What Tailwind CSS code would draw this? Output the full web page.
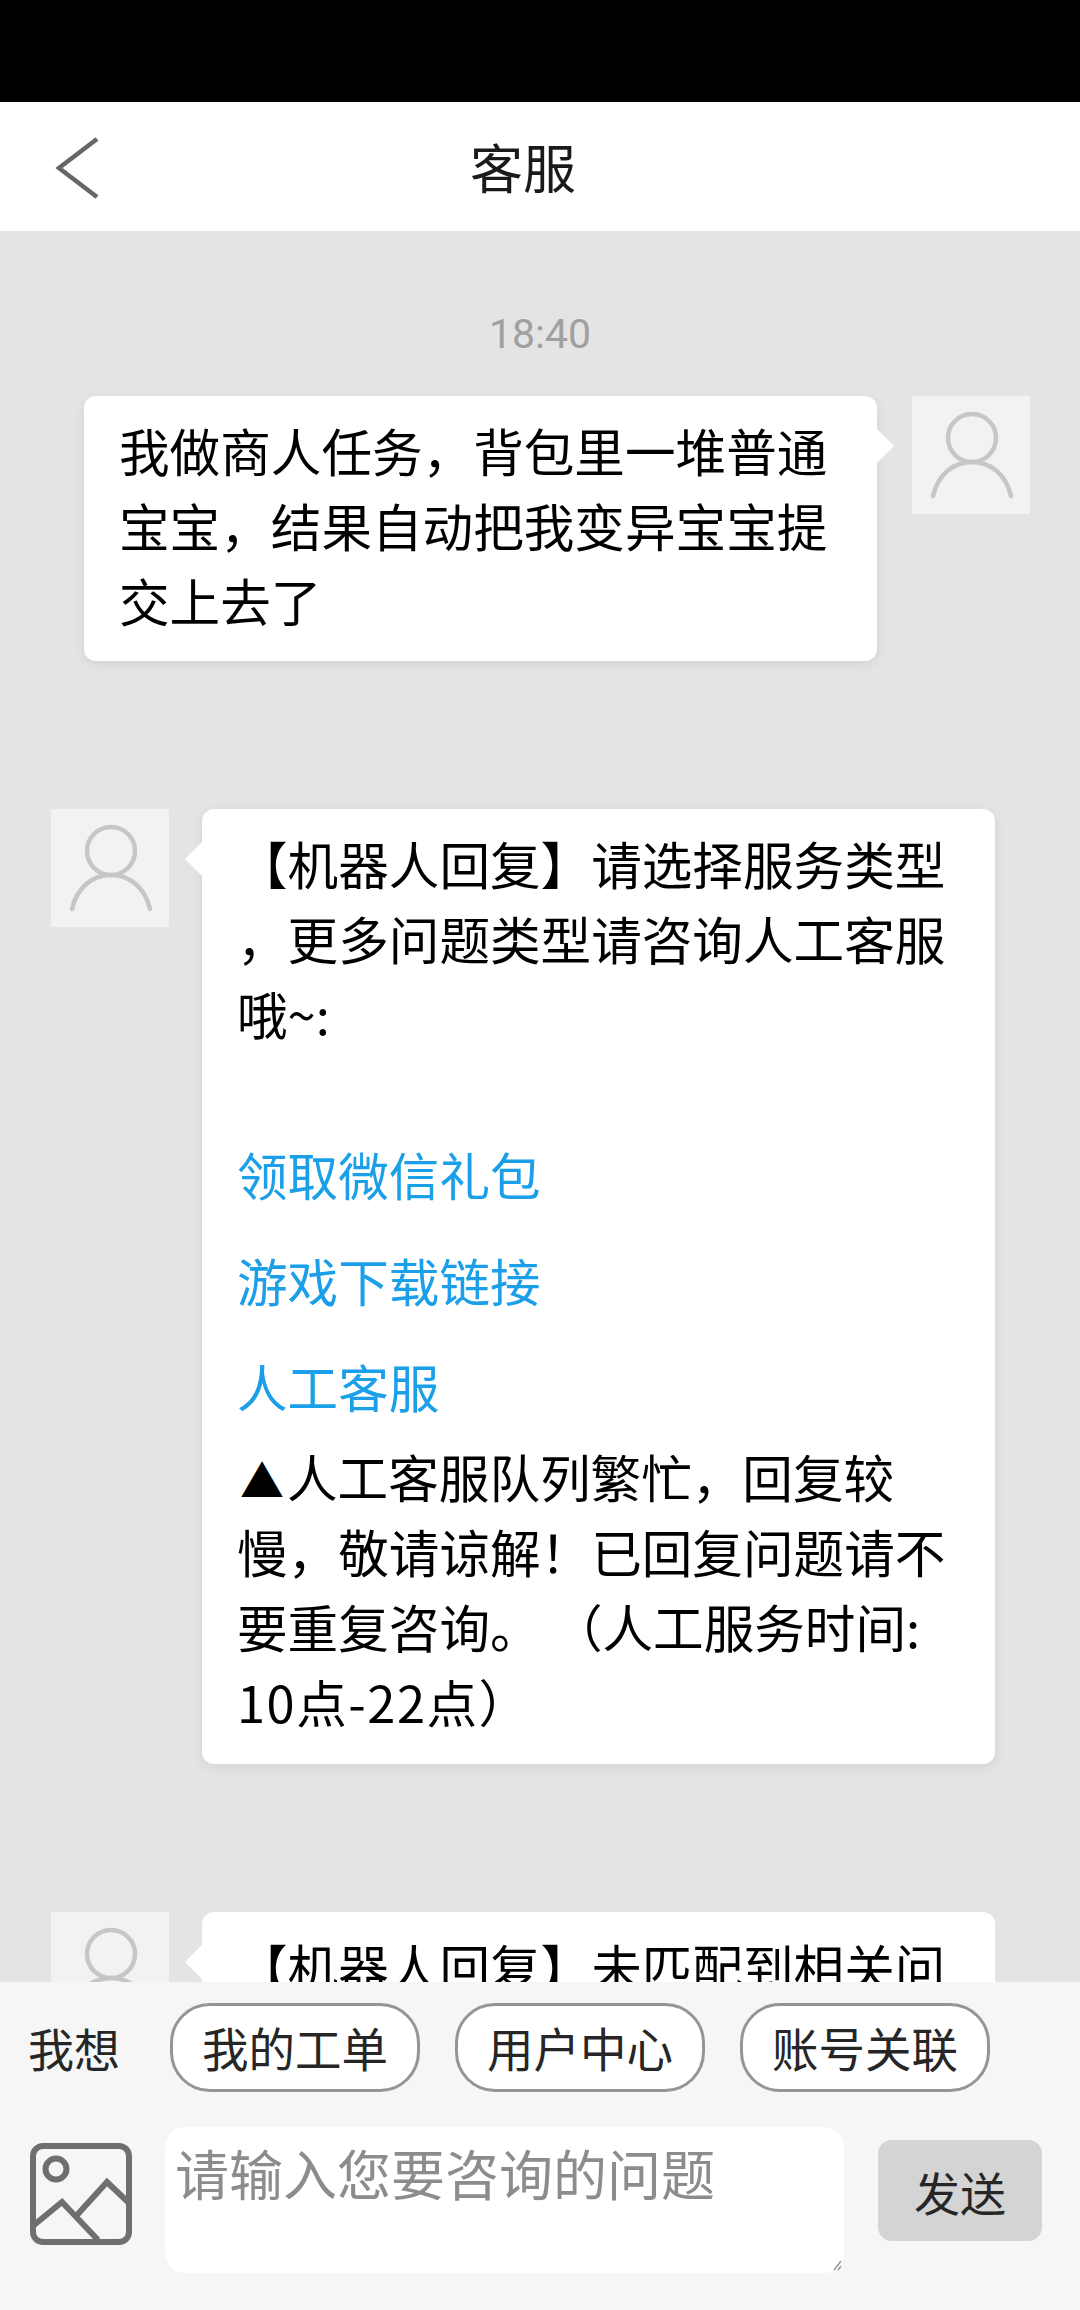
<!DOCTYPE html>
<html lang="zh-CN">
<head>
<meta charset="utf-8">
<title>客服</title>
<script src="https://cdn.jsdelivr.net/npm/@tailwindcss/browser@4"></script>
</head>
<body class="m-0">
<div class="w-[1080px] h-[2310px] flex flex-col overflow-hidden bg-[#e4e4e4] text-black font-['Noto_Sans_CJK_SC','Noto_Sans',sans-serif]">
  <div class="h-[102px] shrink-0 bg-black"></div>
  <header class="h-[129px] shrink-0 bg-white flex items-center relative">
    <svg class="ml-[54px] w-[48px] h-[64px]" viewBox="0 0 48 64" fill="none" stroke="#666666" stroke-width="4.5"><path d="M43 4 L5 33 L43 62"/></svg>
    <h1 class="absolute left-[470px] top-[34px] text-[53px] leading-[60px] font-normal text-[#1a1a1a]">客服</h1>
  </header>

  <main class="flex-1 min-h-0 overflow-hidden">
    <div class="pt-[78px] h-[50px] box-content text-center text-[41px] leading-[50px] text-[#a0a0a0] font-['Roboto',sans-serif]">18:40</div>

    <div class="mt-[37px] pl-[84px] flex items-start">
      <div class="relative w-[793px] bg-white rounded-[12px] px-[35px] pt-[17px] pb-[23px] text-[50.6px] leading-[75px] shadow-[0_3px_12px_rgba(0,0,0,0.08)]">
        <span class="absolute right-[-12px] top-[38px] w-[24px] h-[24px] bg-white rotate-45"></span>
        <p class="whitespace-nowrap">我做商人任务，背包里一堆普通</p>
        <p class="whitespace-nowrap">宝宝，结果自动把我变异宝宝提</p>
        <p class="whitespace-nowrap">交上去了</p>
      </div>
      <div class="ml-[35px] w-[118px] h-[118px] bg-[#f2f2f2] shrink-0">
        <svg viewBox="0 0 118 118" class="w-full h-full" fill="none" stroke="#c6c6c6" stroke-width="4.5" stroke-linecap="round"><circle cx="60" cy="42" r="24"/><path d="M21 100 C26 78 42 66 60 66 C78 66 94 78 99 100"/></svg>
      </div>
    </div>

    <div class="mt-[148px] pl-[51px] flex items-start">
      <div class="w-[118px] h-[118px] bg-[#f2f2f2] shrink-0">
        <svg viewBox="0 0 118 118" class="w-full h-full" fill="none" stroke="#c6c6c6" stroke-width="4.5" stroke-linecap="round"><circle cx="60" cy="42" r="24"/><path d="M21 100 C26 78 42 66 60 66 C78 66 94 78 99 100"/></svg>
      </div>
      <div class="relative ml-[33px] w-[793px] bg-white rounded-[12px] px-[35px] pt-[17px] pb-[25px] text-[50.6px] leading-[75px] shadow-[0_3px_12px_rgba(0,0,0,0.08)]">
        <span class="absolute left-[-12px] top-[38px] w-[24px] h-[24px] bg-white rotate-45"></span>
        <p class="whitespace-nowrap">【机器人回复】请选择服务类型</p>
        <p class="whitespace-nowrap">，更多问题类型请咨询人工客服</p>
        <p class="whitespace-nowrap">哦~:</p>
        <ul class="mt-[70px] text-[#1a9fe8] leading-[106px]">
          <li>领取微信礼包</li>
          <li>游戏下载链接</li>
          <li>人工客服</li>
        </ul>
        <p class="whitespace-nowrap"><span class="inline-block w-[50px] pl-[3px] text-[44px] leading-none">▲</span>人工客服队列繁忙，回复较</p>
        <p class="whitespace-nowrap">慢，敬请谅解！已回复问题请不</p>
        <p class="whitespace-nowrap">要重复咨询。 （人工服务时间:</p>
        <p class="whitespace-nowrap tracking-[1.5px]">10点-22点）</p>
      </div>
    </div>

    <div class="mt-[148px] pl-[51px] flex items-start">
      <div class="w-[118px] h-[118px] bg-[#f2f2f2] shrink-0">
        <svg viewBox="0 0 118 118" class="w-full h-full" fill="none" stroke="#c6c6c6" stroke-width="4.5" stroke-linecap="round"><circle cx="60" cy="42" r="24"/><path d="M21 100 C26 78 42 66 60 66 C78 66 94 78 99 100"/></svg>
      </div>
      <div class="relative ml-[33px] w-[793px] h-[300px] bg-white rounded-[12px] px-[35px] pt-[17px] text-[50.6px] leading-[75px]">
        <span class="absolute left-[-12px] top-[38px] w-[24px] h-[24px] bg-white rotate-45"></span>
        <p class="whitespace-nowrap">【机器人回复】未匹配到相关问</p>
      </div>
    </div>
  </main>

  <footer class="relative h-[328px] shrink-0 bg-[#f6f6f6]">
    <div class="pt-[21px] flex items-center">
      <span class="ml-[28px] w-[142px] text-[46px] leading-[89px] text-[#262626]">我想</span>
      <div class="flex gap-[35px]">
        <button class="w-[250px] h-[89px] rounded-[40px] bg-white border-[3px] border-[#959595] text-[46.5px] leading-none text-[#262626]">我的工单</button>
        <button class="w-[250px] h-[89px] rounded-[40px] bg-white border-[3px] border-[#959595] text-[46.5px] leading-none text-[#262626]">用户中心</button>
        <button class="w-[250px] h-[89px] rounded-[40px] bg-white border-[3px] border-[#959595] text-[46.5px] leading-none text-[#262626]">账号关联</button>
      </div>
    </div>
    <div class="mt-[35px] flex items-start">
      <svg class="ml-[30px] mt-[16px] w-[102px] h-[102px] shrink-0" viewBox="0 0 102 102" fill="none" stroke="#6f6f6f" stroke-width="6"><rect x="3" y="3" width="96" height="96" rx="10"/><circle cx="26" cy="26" r="10.5"/><path d="M4 82 L32 59 L68 97"/><path d="M47 72 L77 39 L99 60"/></svg>
      <div class="relative ml-[33px] w-[679px] h-[146px] bg-white rounded-[20px] px-[10px] pt-[11px] text-[54px] leading-[70px] text-[#8c8c8c] whitespace-nowrap">
        请输入您要咨询的问题
        <svg class="absolute right-[2px] bottom-[2px] w-[12px] h-[12px]" viewBox="0 0 12 12" stroke="#999999" stroke-width="1.5"><path d="M4 11 L11 2"/><path d="M8 11 L11 7"/></svg>
      </div>
      <button class="ml-[34px] mt-[13px] w-[164px] h-[101px] rounded-[14px] bg-[#d4d4d4] text-[46px] leading-none text-[#262626]">发送</button>
    </div>
  </footer>
</div>
</body>
</html>
